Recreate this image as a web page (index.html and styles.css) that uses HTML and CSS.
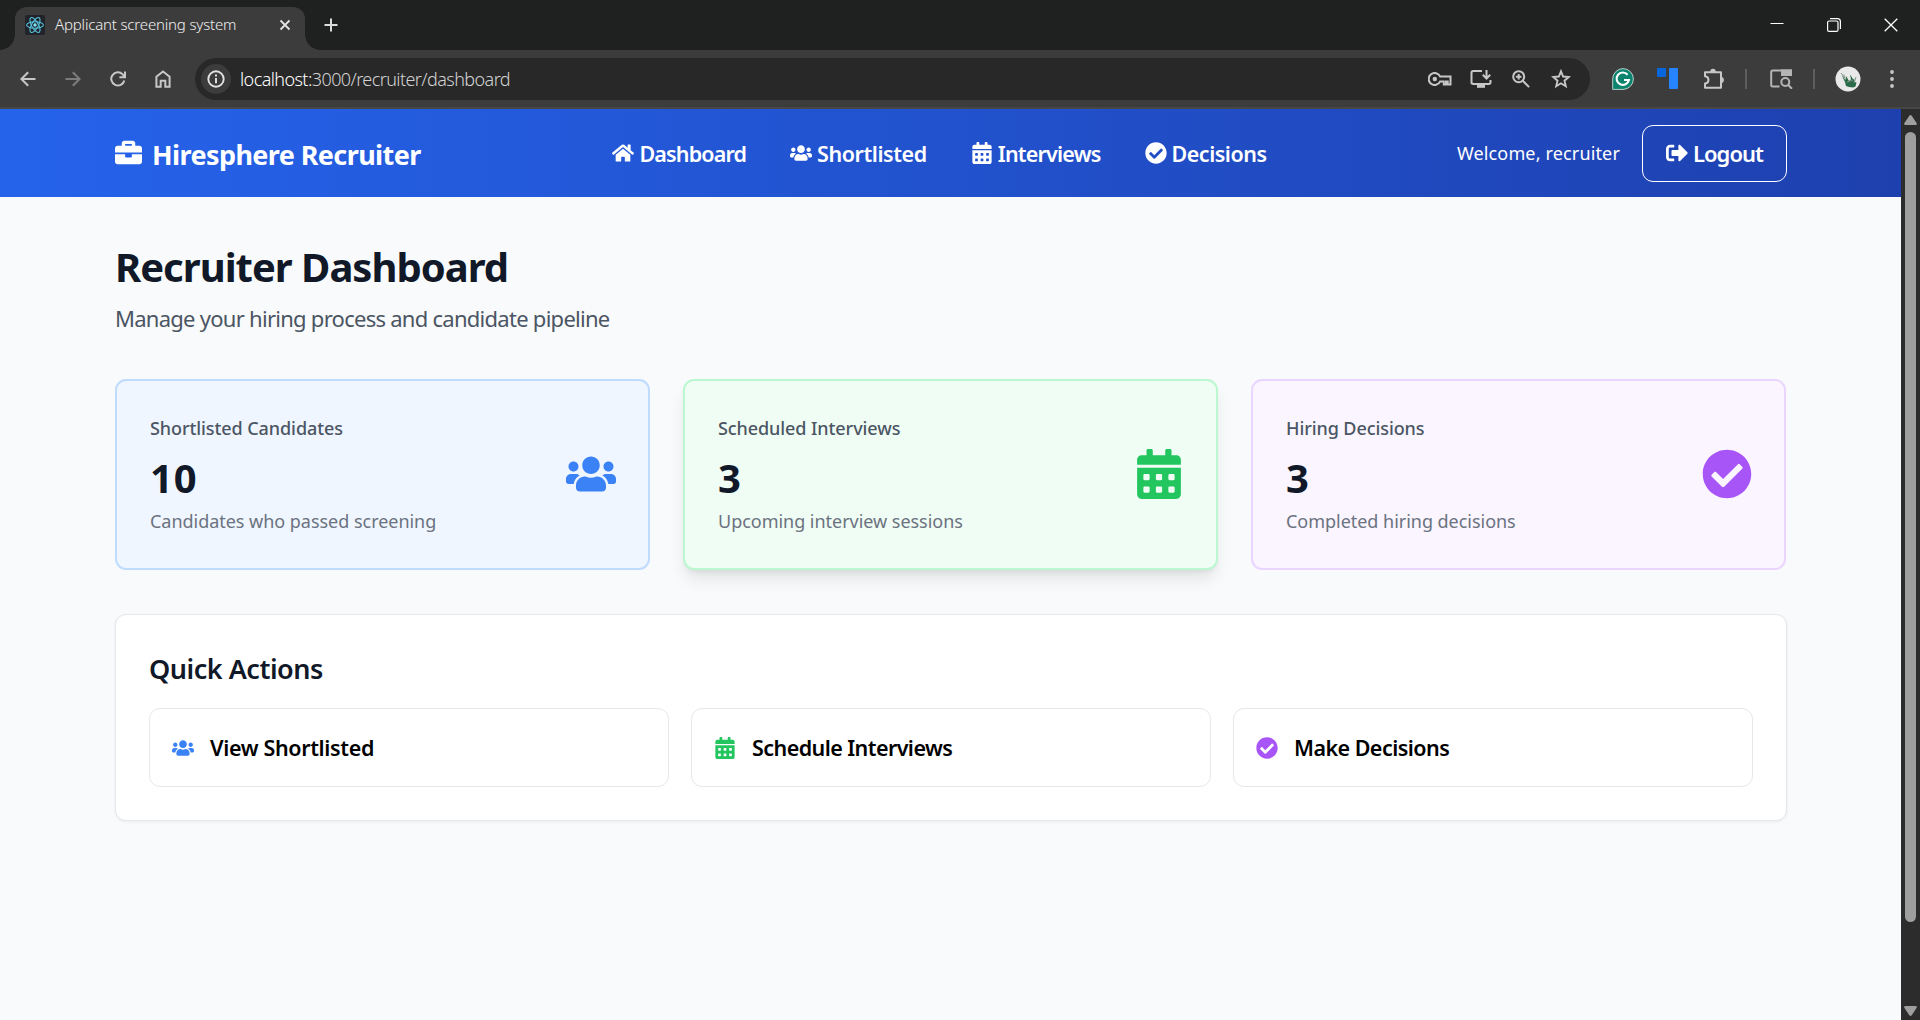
FILE: index.html
```html
<!DOCTYPE html>
<html lang="en">
<head>
<meta charset="utf-8">
<title>Applicant screening system</title>
<link rel="stylesheet" href="styles.css">
</head>
<body>
<svg class="sprite" aria-hidden="true">
  <symbol id="i-users" viewBox="0 0 640 512"><path d="M96 224c35.3 0 64-28.7 64-64s-28.7-64-64-64-64 28.7-64 64 28.7 64 64 64zm448 0c35.3 0 64-28.7 64-64s-28.7-64-64-64-64 28.7-64 64 28.7 64 64 64zm32 32h-64c-17.6 0-33.5 7.1-45.1 18.6 40.3 22.1 68.9 62 75.1 109.4h66c17.7 0 32-14.3 32-32v-32c0-35.3-28.7-64-64-64zm-256 0c61.9 0 112-50.1 112-112S381.9 32 320 32 208 82.1 208 144s50.1 112 112 112zm76.8 32h-8.3c-20.8 10-43.9 16-68.5 16s-47.6-6-68.5-16h-8.3C179.6 288 128 339.6 128 403.2V432c0 26.5 21.5 48 48 48h288c26.5 0 48-21.5 48-48v-28.8c0-63.6-51.6-115.2-115.2-115.2zm-223.7-13.4C161.5 263.1 145.6 256 128 256H64c-35.3 0-64 28.7-64 64v32c0 17.7 14.3 32 32 32h65.9c6.3-47.4 34.9-87.3 75.2-109.4z"/></symbol>
  <symbol id="i-calendar" viewBox="0 0 448 512"><path d="M0 464c0 26.5 21.5 48 48 48h352c26.5 0 48-21.5 48-48V192H0v272zm320-196c0-6.6 5.4-12 12-12h40c6.6 0 12 5.4 12 12v40c0 6.6-5.4 12-12 12h-40c-6.6 0-12-5.4-12-12v-40zm0 128c0-6.6 5.4-12 12-12h40c6.6 0 12 5.4 12 12v40c0 6.6-5.4 12-12 12h-40c-6.6 0-12-5.4-12-12v-40zM192 268c0-6.6 5.4-12 12-12h40c6.6 0 12 5.4 12 12v40c0 6.6-5.4 12-12 12h-40c-6.6 0-12-5.4-12-12v-40zm0 128c0-6.6 5.4-12 12-12h40c6.6 0 12 5.4 12 12v40c0 6.6-5.4 12-12 12h-40c-6.6 0-12-5.4-12-12v-40zM64 268c0-6.6 5.4-12 12-12h40c6.6 0 12 5.4 12 12v40c0 6.6-5.4 12-12 12H76c-6.6 0-12-5.4-12-12v-40zm0 128c0-6.6 5.4-12 12-12h40c6.6 0 12 5.4 12 12v40c0 6.6-5.4 12-12 12H76c-6.6 0-12-5.4-12-12v-40zM400 64h-48V16c0-8.8-7.2-16-16-16h-32c-8.8 0-16 7.2-16 16v48H160V16c0-8.8-7.2-16-16-16h-32c-8.8 0-16 7.2-16 16v48H48C21.5 64 0 85.5 0 112v48h448v-48c0-26.5-21.5-48-48-48z"/></symbol>
  <symbol id="i-check" viewBox="0 0 512 512"><path d="M504 256c0 136.967-111.033 248-248 248S8 392.967 8 256 119.033 8 256 8s248 111.033 248 248zM227.314 387.314l184-184c6.248-6.248 6.248-16.379 0-22.627l-22.627-22.627c-6.248-6.249-16.379-6.249-22.628 0L216 308.118l-70.059-70.059c-6.248-6.248-16.379-6.248-22.628 0l-22.627 22.627c-6.248 6.248-6.248 16.379 0 22.627l104 104c6.249 6.249 16.379 6.249 22.628.001z"/></symbol>
</svg>

<header class="chrome">
  <div class="tabstrip">
    <div class="tab">
      <svg class="favicon" width="20" height="20" viewBox="0 0 20 20"><rect width="20" height="20" rx="2" fill="#20232a"/><g fill="none" stroke="#58c4dc" stroke-width="1.1"><ellipse cx="10" cy="10" rx="8.4" ry="3.3"/><ellipse cx="10" cy="10" rx="8.4" ry="3.3" transform="rotate(60 10 10)"/><ellipse cx="10" cy="10" rx="8.4" ry="3.3" transform="rotate(120 10 10)"/></g><circle cx="10" cy="10" r="1.7" fill="#7fe3f5"/></svg>
      <span class="tab-title">Applicant screening system</span>
      <svg class="tab-close" width="12" height="12" viewBox="0 0 12 12" fill="none" stroke="#e3e3e3" stroke-width="1.8"><path d="M1.5 1.5l9 9M10.5 1.5l-9 9"/></svg>
    </div>
    <svg class="new-tab" width="14" height="14" viewBox="0 0 14 14" fill="none" stroke="#dcdcdc" stroke-width="2"><path d="M7 .5v13M.5 7h13"/></svg>
    <div class="window-buttons">
      <svg width="14" height="14" viewBox="0 0 14 14" stroke="#fff"><path d="M.5 5.5h13"/></svg>
      <svg width="14" height="14" viewBox="0 0 14 14" fill="none" stroke="#fff" stroke-width="1.2"><rect x=".6" y="3" width="10.4" height="10.4" rx="1.5"/><path d="M3 .6h7.500a2.900 2.900 0 0 1 2.900 2.900V11"/></svg>
      <svg width="14" height="14" viewBox="0 0 14 14" stroke="#fff" stroke-width="1.3"><path d="M.7.7l12.600 12.600M13.300.7L.7 13.300"/></svg>
    </div>
  </div>
  <div class="toolbar">
    <div class="nav-buttons">
      <svg width="16" height="16" viewBox="0 0 16 16" fill="none" stroke="#c7c7c7" stroke-width="2"><path d="M15.500 8H1.500M8.200 1.200L1.400 8l6.800 6.800"/></svg>
      <svg width="16" height="16" viewBox="0 0 16 16" fill="none" stroke="#7d7d7d" stroke-width="2"><path d="M.5 8h14M7.800 1.200L14.600 8l-6.800 6.800"/></svg>
      <svg width="16" height="16" viewBox="0 0 16 16" fill="none" stroke="#c7c7c7" stroke-width="2"><path d="M14.300 9.400A6.600 6.600 0 1 1 12.700 3.400L14.500 5.500M15 .5v5.800H9.400"/></svg>
      <svg width="16" height="18" viewBox="0 0 16 18" fill="none" stroke="#c7c7c7" stroke-width="2"><path d="M1.400 16.800V6.700L8 1.500l6.600 5.200v10.100h-4.300v-6.100H5.700v6.100z"/></svg>
    </div>
    <div class="omnibox">
      <span class="site-info"><svg width="18" height="18" viewBox="0 0 18 18" fill="none" stroke="#e3e3e3" stroke-width="1.9"><circle cx="9" cy="9" r="7.7"/><path d="M9 8v5.200M9 4.600v2"/></svg></span>
      <span class="url"><span class="host">localhost:</span>3000/recruiter/dashboard</span>
      <span class="omni-icons">
        <svg class="key" width="24" height="14" viewBox="0 0 24 14" fill="none" stroke="#c7c7c7" stroke-width="2"><path d="M12.200 4.600A6 6 0 1 0 12.200 9.400H15.800V12.600H18V9.400h1.700v3.200H22.500V4.600z"/><circle cx="6.8" cy="7" r="2.2" fill="#c7c7c7" stroke="none"/></svg>
        <svg class="install" width="22" height="20" viewBox="0 0 22 20" fill="none" stroke="#c7c7c7" stroke-width="2"><path d="M12 2H3.200Q1.500 2 1.500 3.700v9.600Q1.500 15 3.200 15h15.600q1.700 0 1.700-1.700V11M16.500 1v8M12.800 5.800l3.700 3.700 3.700-3.700"/><path d="M7 15h8v3.800H7z" fill="#c7c7c7" stroke="none"/></svg>
        <svg class="magnifier" width="18" height="18" viewBox="0 0 18 18" fill="none" stroke="#c7c7c7" stroke-width="2"><circle cx="6.7" cy="6.7" r="5.5"/><path d="M10.800 10.800l6.300 6.300M6.700 3.900v5.600M3.900 6.700h5.600"/></svg>
        <svg width="20" height="20" viewBox="0 0 20 20" fill="none" stroke="#c7c7c7" stroke-width="1.9"><path d="M10 2.300l2.150 5.250 5.650.45-4.300 3.700 1.300 5.500-4.800-2.950-4.800 2.950 1.300-5.500-4.300-3.700 5.650-.45z"/></svg>
      </span>
    </div>
    <div class="extensions">
      <svg class="ext-grammar" width="22" height="22" viewBox="0 0 22 22"><path d="M11 .6A10.400 10.400 0 1 1 11 21.400H.7V11A10.400 10.400 0 0 1 11 .6z" fill="#0b846e" stroke="#b9cfc9"/><path d="M15.600 6.700A6.200 6.200 0 1 0 16.900 12H12" fill="none" stroke="#fff" stroke-width="2.2"/></svg>
      <svg class="ext-blocks" width="21" height="22" viewBox="0 0 21 22"><rect x="0" y="0" width="9" height="9" rx="1" fill="#0866dd"/><rect x="12" y="0" width="9" height="21" rx="1" fill="#2684ff"/></svg>
      <svg class="ext-puzzle" width="22" height="22" viewBox="0 0 22 22" fill="none" stroke="#c7c7c7" stroke-width="2"><path d="M2 4.200h16v15.600H2V15.500c4.600-.4 4.600-6.800 0-7.200z" stroke-linejoin="round"/><path d="M7.200 4a2.800 3.200 0 0 1 5.600 0zM18 9a2.900 2.900 0 0 1 0 5.800z" fill="#c7c7c7" stroke="none"/></svg>
      <i class="divider"></i>
      <svg class="ext-lens" width="23" height="20" viewBox="0 0 23 20" fill="none" stroke="#b5b5b5" stroke-width="2"><path d="M9.500 17.500H2.800Q1.200 17.500 1.200 16V3Q1.200 1.400 2.800 1.400H21V6H12"/><path d="M12 1.400h9V6h-9z" fill="#b5b5b5"/><circle cx="15.3" cy="13" r="4"/><path d="M18 15.800l4 4"/></svg>
      <i class="divider"></i>
      <svg class="avatar" width="26" height="26" viewBox="0 0 26 26"><circle cx="13" cy="13" r="12.5" fill="#e9e9e9"/><path d="M6.500 9l4 5 .5-4 3 5 2-1.500-1-5 3 4.500 2 1-1.500 1.500 3 1-1 4-2.500 1-4-.5-3-1-1-4z" fill="#2b6b4a"/><path d="M6 7l4 5M9 8.500v4M12 16l6-2M19 17l2-6" stroke="#7d9489" fill="none"/></svg>
      <svg class="kebab" width="4" height="18" viewBox="0 0 4 18" fill="#c7c7c7"><circle cx="2" cy="2" r="1.9"/><circle cx="2" cy="9" r="1.9"/><circle cx="2" cy="16" r="1.9"/></svg>
    </div>
  </div>
</header>

<div class="viewport">
  <div class="page">
    <nav class="navbar">
      <div class="brand">
        <svg width="27" height="27" viewBox="0 0 512 512" fill="currentColor"><path d="M320 336c0 8.840-7.160 16-16 16h-96c-8.840 0-16-7.160-16-16v-48H0v144c0 25.600 22.400 48 48 48h416c25.600 0 48-22.400 48-48V288H320v48zm144-208h-80V80c0-25.600-22.400-48-48-48H176c-25.600 0-48 22.400-48 48v48H48c-25.600 0-48 22.400-48 48v80h512v-80c0-25.600-22.400-48-48-48zm-144 0H192V96h128v32z"/></svg>
        <span>Hiresphere Recruiter</span>
      </div>
      <div class="links">
        <a class="link link-home"><svg class="icon" viewBox="0 0 576 512"><path d="M280.370 148.260L96 300.110V464a16 16 0 0 0 16 16l112.060-.290a16 16 0 0 0 15.920-16V368a16 16 0 0 1 16-16h64a16 16 0 0 1 16 16v95.640a16 16 0 0 0 16 16.050L464 480a16 16 0 0 0 16-16V300L295.670 148.260a12.190 12.190 0 0 0-15.300 0zM571.600 251.470L488 182.560V44.050a12 12 0 0 0-12-12h-56a12 12 0 0 0-12 12v72.610L318.470 43a48 48 0 0 0-61 0L4.340 251.470a12 12 0 0 0-1.600 16.900l25.500 31A12 12 0 0 0 45.150 301l235.220-193.740a12.190 12.190 0 0 1 15.300 0L530.900 301a12 12 0 0 0 16.900-1.600l25.500-31a12 12 0 0 0-1.700-16.930z"/></svg><span>Dashboard</span></a>
        <a class="link link-short"><svg class="icon"><use href="#i-users"/></svg><span>Shortlisted</span></a>
        <a class="link link-int"><svg class="icon"><use href="#i-calendar"/></svg><span>Interviews</span></a>
        <a class="link link-dec"><svg class="icon"><use href="#i-check"/></svg><span>Decisions</span></a>
      </div>
      <div class="account">
        <span class="welcome">Welcome, recruiter</span>
        <a class="logout"><svg class="icon" viewBox="0 0 512 512"><path d="M497 273L329 441c-15 15-41 4.500-41-17v-96H152c-13.300 0-24-10.700-24-24v-96c0-13.300 10.700-24 24-24h136V88c0-21.400 25.900-32 41-17l168 168c9.300 9.400 9.300 24.600 0 34zM192 436v-40c0-6.600-5.400-12-12-12H96c-17.700 0-32-14.300-32-32V160c0-17.700 14.300-32 32-32h84c6.600 0 12-5.400 12-12V76c0-6.600-5.400-12-12-12H96c-53 0-96 43-96 96v192c0 53 43 96 96 96h84c6.600 0 12-5.400 12-12z"/></svg><span>Logout</span></a>
      </div>
    </nav>
    <main class="content">
      <h1>Recruiter Dashboard</h1>
      <p class="subtitle">Manage your hiring process and candidate pipeline</p>
      <section class="stats">
        <article class="stat blue">
          <div><p class="label">Shortlisted Candidates</p><p class="number">10</p><p class="desc">Candidates who passed screening</p></div>
          <svg class="stat-icon"><use href="#i-users"/></svg>
        </article>
        <article class="stat green">
          <div><p class="label">Scheduled Interviews</p><p class="number">3</p><p class="desc">Upcoming interview sessions</p></div>
          <svg class="stat-icon"><use href="#i-calendar"/></svg>
        </article>
        <article class="stat purple">
          <div><p class="label">Hiring Decisions</p><p class="number">3</p><p class="desc">Completed hiring decisions</p></div>
          <svg class="stat-icon"><use href="#i-check"/></svg>
        </article>
      </section>
      <section class="panel">
        <h2>Quick Actions</h2>
        <div class="actions">
          <a class="action act-view"><svg class="icon"><use href="#i-users"/></svg><span>View Shortlisted</span></a>
          <a class="action act-schedule"><svg class="icon"><use href="#i-calendar"/></svg><span>Schedule Interviews</span></a>
          <a class="action act-decide"><svg class="icon"><use href="#i-check"/></svg><span>Make Decisions</span></a>
        </div>
      </section>
    </main>
  </div>
  <div class="scrollbar">
    <svg width="13" height="10" viewBox="0 0 13 10" fill="#9f9f9f"><path d="M6.500 0Q7.200 0 7.700.7L12.700 8.200Q13.200 10 11.500 10h-10Q-.2 10 .3 8.200L5.300.7Q5.800 0 6.500 0z"/></svg>
    <div class="thumb"></div>
    <svg width="13" height="10" viewBox="0 0 13 10" fill="#9f9f9f"><path d="M6.500 10Q7.200 10 7.700 9.300L12.700 1.800Q13.200 0 11.500 0h-10Q-.2 0 .3 1.800L5.300 9.300Q5.800 10 6.500 10z"/></svg>
  </div>
</div>
</body>
</html>
```

FILE: styles.css
```css
* { box-sizing: border-box; margin: 0; padding: 0; }
html, body { height: 100%; overflow: hidden; }
body {
  display: flex;
  flex-direction: column;
  font-family: "Noto Sans", "Open Sans", sans-serif;
  color: #111827;
}
svg { display: block; flex: none; }
span { white-space: nowrap; }
.sprite { display: none; }

/* Browser frame */
.chrome { height: 109px; flex: none; background: #3c3c3c; border-bottom: 2px solid #474747; }
.tabstrip { height: 50px; background: #1f2120; display: flex; align-items: center; }
.tab {
  width: 290px;
  height: 43px;
  margin: 7px 0 0 15px;
  padding: 0 15px 7px 10px;
  background: #3c3c3c;
  border-radius: 12px 12px 0 0;
  display: flex;
  align-items: center;
  position: relative;
}
.tab::before, .tab::after {
  content: "";
  position: absolute;
  bottom: 0;
  width: 15px;
  height: 15px;
}
.tab::before { left: -15px; background: radial-gradient(circle at 0 0, #1f2120 14.5px, #3c3c3c 15px); }
.tab::after { right: -15px; background: radial-gradient(circle at 100% 0, #1f2120 14.5px, #3c3c3c 15px); }
.tab-title { margin-left: 10px; padding-bottom: 2px; font-size: 15px; font-weight: 300; line-height: 20px; letter-spacing: -.17px; color: #f0f0f0; }
.tab-close { margin-left: auto; margin-right: -1px; }
.new-tab { margin-left: 19px; }
.window-buttons { display: flex; gap: 43px; margin: 0 22px 0 auto; }
.toolbar { height: 57px; display: flex; align-items: center; padding-left: 20px; }
.nav-buttons { display: flex; align-items: center; gap: 29px; width: 175px; }
.omnibox {
  width: 1395px;
  height: 42px;
  border-radius: 21px;
  background: #282828;
  display: flex;
  align-items: center;
  padding: 0 19px 0 6px;
}
.site-info { width: 30px; height: 30px; border-radius: 50%; background: #3c3c3c; display: grid; place-items: center; }
.url { margin-left: 9px; font-size: 18px; font-weight: 300; letter-spacing: -.58px; color: #d2d2d2; }
.host { color: #fff; }
.omni-icons { margin-left: auto; display: flex; align-items: center; }
.key { margin-right: 18px; }
.install { margin-right: 20px; }
.magnifier { margin-right: 21px; }
.extensions { flex: 1; display: flex; align-items: center; }
.ext-grammar { margin-left: 22px; }
.ext-blocks { margin-left: 23px; }
.ext-puzzle { margin-left: 25px; }
.divider { width: 2px; height: 20px; background: #5e5e5e; margin-left: 20px; }
.ext-lens { margin-left: 23px; }
.avatar { margin-left: 20px; }
.kebab { margin-left: 29px; }

/* Web page */
.viewport { flex: 1; min-height: 0; display: flex; }
.page { flex: 1; background: #f9fafc; }
.icon { width: 22px; height: 22px; fill: currentColor; }
.navbar {
  height: 88px;
  padding: 0 114px 0 115px;
  display: flex;
  align-items: center;
  justify-content: space-between;
  color: #fff;
  background: linear-gradient(to right, #2563eb, #1e40af);
}
.brand { display: flex; align-items: center; gap: 10px; width: 307px; font-size: 27px; font-weight: 700; letter-spacing: -.6px; }
.brand svg { margin-top: -2px; }
.brand span { line-height: 36px; padding-top: 4px; }
.links { display: flex; gap: 44px; }
.link { display: flex; align-items: center; gap: 5px; font-size: 21.5px; font-weight: 600; line-height: 32px; }
.link span { padding-top: 1px; }
.link-home span { letter-spacing: -.85px; }
.link-short span { letter-spacing: -.43px; }
.link-int span { letter-spacing: -.8px; }
.link-dec span { letter-spacing: -.5px; }
.account { display: flex; align-items: center; gap: 22px; }
.welcome { font-size: 18px; letter-spacing: .15px; }
.logout {
  width: 145px;
  height: 57px;
  border: 1px solid #fff;
  border-radius: 11px;
  display: flex;
  align-items: center;
  justify-content: center;
  gap: 5px;
  font-size: 22px;
  font-weight: 600;
  letter-spacing: -.95px;
}

.content { padding: 46px 114px 0 115px; }
h1 { font-size: 40px; line-height: 48px; letter-spacing: -1px; }
.subtitle { margin-top: 12px; font-size: 22px; line-height: 30px; letter-spacing: -.73px; color: #4b5563; }
.stats { margin: 46px 1px 0 0; display: grid; grid-template-columns: repeat(3, 1fr); gap: 33px; }
.stat {
  height: 191px;
  padding: 0 32px 0 33px;
  border: 2px solid;
  border-radius: 11px;
  display: flex;
  align-items: center;
  justify-content: space-between;
}
.stat-icon { width: 50px; height: 50px; margin-bottom: 2px; fill: currentColor; }
.blue { background: #eff6ff; border-color: #bfdbfe; color: #3b82f6; }
.green { background: #f0fdf4; border-color: #bbf7d0; color: #22c55e; box-shadow: 0 11px 17px -3px rgba(0,0,0,.1), 0 4px 7px -4px rgba(0,0,0,.1); }
.purple { background: #faf5ff; border-color: #e9d5ff; color: #a855f7; }
.label { font-size: 18px; font-weight: 500; line-height: 26px; letter-spacing: -.08px; color: #4b5563; }
.number { margin-top: 13px; font-size: 40px; font-weight: 700; line-height: 48px; letter-spacing: .8px; color: #111827; }
.desc { margin-top: 6px; font-size: 18px; line-height: 26px; letter-spacing: -.03px; color: #6b7280; }
.panel {
  margin-top: 44px;
  height: 207px;
  padding: 36px 33px 0;
  background: #fff;
  border: 1px solid #e5e7eb;
  border-radius: 11px;
  box-shadow: 0 1px 3px rgba(0,0,0,.06);
}
h2 { font-size: 27px; font-weight: 600; line-height: 36px; letter-spacing: -.48px; }
.actions { margin-top: 21px; display: grid; grid-template-columns: repeat(3, 1fr); gap: 22px; }
.action {
  height: 79px;
  padding-left: 22px;
  border: 1px solid #e5e7eb;
  border-radius: 11px;
  display: flex;
  align-items: center;
  gap: 16px;
  font-size: 21.5px;
  font-weight: 600;
  color: #000;
}
.act-view span { letter-spacing: -.35px; }
.act-schedule span { letter-spacing: -.57px; }
.act-decide span { letter-spacing: -.54px; }
.act-view svg { color: #3b82f6; }
.act-schedule svg { color: #22c55e; }
.act-decide svg { color: #a855f7; }

.scrollbar { width: 19px; background: #2c2c2c; display: flex; flex-direction: column; align-items: center; padding: 6px 0 4px; }
.thumb { width: 11px; height: 790px; margin: 7px 0 auto; border-radius: 6px; background: #9f9f9f; }
```
